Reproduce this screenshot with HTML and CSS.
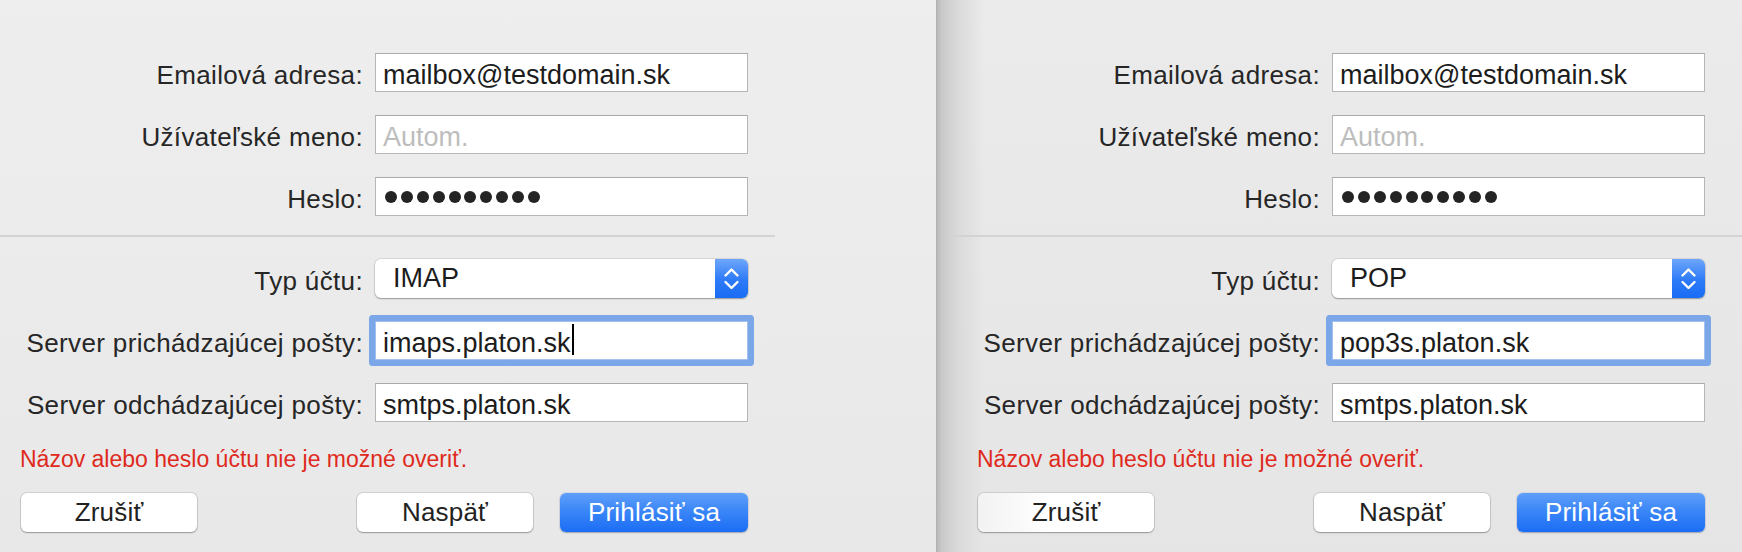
FILE: index.html
```html
<!DOCTYPE html>
<html lang="sk">
<head>
<meta charset="utf-8">
<title>Pridať účet</title>
<link rel="stylesheet" href="styles.css">
</head>
<body>
<div class="screens">
  <section class="window win-left">
    <div class="grid">
      <div class="label">Emailová adresa:</div>
      <div class="field">mailbox@testdomain.sk</div>
      <div class="label">Užívateľské meno:</div>
      <div class="field placeholder">Autom.</div>
      <div class="label">Heslo:</div>
      <div class="field dots"><i></i><i></i><i></i><i></i><i></i><i></i><i></i><i></i><i></i><i></i></div>
    </div>
    <div class="sep"></div>
    <div class="grid">
      <div class="label">Typ účtu:</div>
      <div class="popup"><span class="popup-text">IMAP</span><span class="stepper"><svg width="33" height="39" viewBox="0 0 33 39"><path d="M10.5 16.5 L16.5 10.5 L22.5 16.5 M10.5 23 L16.5 29 L22.5 23" fill="none" stroke="#fff" stroke-width="2.4" stroke-linecap="round" stroke-linejoin="round"/></svg></span></div>
      <div class="label">Server prichádzajúcej pošty:</div>
      <div class="field focused">imaps.platon.sk<span class="caret"></span></div>
      <div class="label">Server odchádzajúcej pošty:</div>
      <div class="field">smtps.platon.sk</div>
    </div>
    <p class="error">Názov alebo heslo účtu nie je možné overiť.</p>
    <div class="buttons">
      <button class="btn">Zrušiť</button>
      <span class="spacer"></span>
      <button class="btn">Naspäť</button>
      <button class="btn primary">Prihlásiť sa</button>
    </div>
  </section>
  <section class="window win-right">
    <div class="grid">
      <div class="label">Emailová adresa:</div>
      <div class="field">mailbox@testdomain.sk</div>
      <div class="label">Užívateľské meno:</div>
      <div class="field placeholder">Autom.</div>
      <div class="label">Heslo:</div>
      <div class="field dots"><i></i><i></i><i></i><i></i><i></i><i></i><i></i><i></i><i></i><i></i></div>
    </div>
    <div class="sep"></div>
    <div class="grid">
      <div class="label">Typ účtu:</div>
      <div class="popup"><span class="popup-text">POP</span><span class="stepper"><svg width="33" height="39" viewBox="0 0 33 39"><path d="M10.5 16.5 L16.5 10.5 L22.5 16.5 M10.5 23 L16.5 29 L22.5 23" fill="none" stroke="#fff" stroke-width="2.4" stroke-linecap="round" stroke-linejoin="round"/></svg></span></div>
      <div class="label">Server prichádzajúcej pošty:</div>
      <div class="field focused">pop3s.platon.sk</div>
      <div class="label">Server odchádzajúcej pošty:</div>
      <div class="field">smtps.platon.sk</div>
    </div>
    <p class="error">Názov alebo heslo účtu nie je možné overiť.</p>
    <div class="buttons">
      <button class="btn btn-shaded">Zrušiť</button>
      <span class="spacer"></span>
      <button class="btn">Naspäť</button>
      <button class="btn primary">Prihlásiť sa</button>
    </div>
  </section>
</div>
</body>
</html>
```

FILE: styles.css
```css
html, body {
  margin: 0;
  padding: 0;
  height: 100%;
}
body {
  font-family: "Liberation Sans", Arial, sans-serif;
  font-size: 26px;
  color: #262626;
  overflow: hidden;
}
.screens {
  display: flex;
  height: 552px;
}
.window {
  padding-top: 53px;
  box-sizing: border-box;
  height: 552px;
}
.win-left {
  width: 936px;
  flex: none;
  background: linear-gradient(#eeeeee, #e8e8e8);
  --inset: 20px;
}
.win-right {
  flex: 1;
  --inset: 41px;
  background:
    linear-gradient(90deg, #a9a9a9 0, #b9b9b9 1px, #c9c9c9 6px, #dadada 22px, rgba(232,232,232,0) 48px),
    linear-gradient(#ebebeb, #e5e5e5);
}
.grid {
  display: grid;
  grid-template-columns: 343px 373px;
  column-gap: 12px;
  grid-auto-rows: 39px;
  row-gap: 23px;
  margin-left: var(--inset);
  width: 728px;
}
.label {
  text-align: right;
  white-space: nowrap;
  padding-top: 5px;
  line-height: 34px;
  letter-spacing: 0.35px;
  color: #262626;
}
.field {
  box-sizing: border-box;
  height: 39px;
  background: #fff;
  border: 1px solid #b6b6b6;
  border-top-color: #aaaaaa;
  padding: 4px 6px 0 7px;
  font-size: 27px;
  line-height: 35px;
  color: #1c1c1c;
  white-space: nowrap;
  overflow: hidden;
}
.placeholder {
  color: #bdbdbd;
}
.dots {
  display: flex;
  align-items: center;
  gap: 3.9px;
  padding: 0 0 0 9px;
}
.dots i {
  display: block;
  width: 12px;
  height: 12px;
  border-radius: 50%;
  background: #242424;
}
.focused {
  border-color: #a4c0ec;
  border-radius: 1px;
  box-shadow: 0 0 0 6px #7ba7e9;
  overflow: visible;
}
.caret {
  display: inline-block;
  width: 2px;
  height: 31px;
  margin-top: -3px;
  margin-left: 1px;
  vertical-align: -3px;
  background: #000;
}
.sep {
  height: 2px;
  background: #d3d3d3;
  margin: 19px 0 22px;
}
.win-left .sep {
  width: 775px;
}
.win-right .sep {
  margin-left: 14px;
}
.popup {
  display: flex;
  height: 39px;
  background: #fff;
  border-radius: 6px;
  box-shadow: 0 0 0 1px rgba(0,0,0,0.08), 0 1px 1.5px rgba(0,0,0,0.3);
  overflow: hidden;
}
.popup-text {
  flex: 1;
  padding-left: 18px;
  line-height: 39px;
  font-size: 27px;
  color: #1c1c1c;
}
.stepper {
  width: 33px;
  height: 39px;
  background: linear-gradient(#6ea6fa, #2c7af7 55%, #1a6cf5);
}
.stepper svg {
  display: block;
}
.error {
  margin: 23px 0 0 var(--inset);
  font-size: 23px;
  line-height: 28px;
  color: #df2a1d;
  white-space: nowrap;
}
.buttons {
  display: flex;
  gap: 27px;
  margin: 20px 0 0 var(--inset);
  width: 728px;
}
.spacer {
  flex: 1;
  margin-left: -27px;
}
.btn {
  font-family: inherit;
  font-size: 26px;
  letter-spacing: 0.2px;
  width: 176px;
  height: 39px;
  line-height: 39px;
  padding: 0;
  border: none;
  border-radius: 6px;
  background: #ffffff;
  color: #222;
  box-shadow: 0 0 0 1px rgba(0,0,0,0.1), 0 1px 1.5px rgba(0,0,0,0.28);
}
.btn:first-child {
  margin-left: 1px;
}
.btn-shaded {
  background: linear-gradient(90deg, #f2f2f2, #ffffff 40%);
}
.primary {
  width: 188px;
  color: #fff;
  background: linear-gradient(#5f9ff9, #3b86f7 45%, #1b6df5);
  box-shadow: 0 0 0 1px rgba(0,60,200,0.08), 0 1px 1.5px rgba(0,0,0,0.25);
}
```
